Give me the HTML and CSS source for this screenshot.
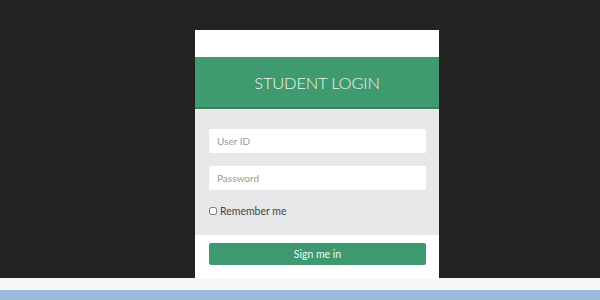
FILE: index.html
```html
<!DOCTYPE html>
<html lang="en">
<head>
    <meta charset="UTF-8">
    <title>Student Login</title>
    <link rel="stylesheet" href="styles.css">
</head>
<body>
    <div class="stage">
        <form class="login">
            <div class="login-top"></div>
            <h1 class="login-title">STUDENT LOGIN</h1>
            <div class="login-body">
                <input class="field" type="text" placeholder="User ID">
                <input class="field" type="password" placeholder="Password">
                <label class="remember"><input type="checkbox"> Remember me</label>
            </div>
            <div class="login-foot">
                <button class="btn" type="button">Sign me in</button>
            </div>
        </form>
    </div>
    <div class="strip"></div>
    <div class="bar"></div>
</body>
</html>
```

FILE: styles.css
```css
body {
    margin: 0;
    padding: 0;
    height: 300px;
    overflow: hidden;
    font-family: Lato, "Open Sans", sans-serif;
    background-color: #f7f7f7;
}
.stage {
    height: 278px;
    background-color: #222222;
    display: flex;
    justify-content: center;
    padding-top: 30px;
    box-sizing: border-box;
}
.login {
    width: 244px;
    height: 249px;
    margin-left: 34px;
    background-color: #ffffff;
    display: flex;
    flex-direction: column;
    position: relative;
    z-index: 1;
}
.login-top {
    height: 27px;
}
.login-title {
    margin: 0;
    height: 50px;
    line-height: 52px;
    background-color: #409a6f;
    border-bottom: 2px solid #37845f;
    color: #e8f6ee;
    font-weight: 300;
    font-size: 16.5px;
    letter-spacing: -0.2px;
    text-align: center;
}
.login-body {
    background-color: #e8e8ea;
    padding: 20px 13px 0 14px;
    height: 126px;
    box-sizing: border-box;
    display: flex;
    flex-direction: column;
}
.field {
    height: 24px;
    border: none;
    border-radius: 2px;
    background: #ffffff;
    padding: 0 8px;
    font-family: inherit;
    font-size: 10px;
    color: #444;
    margin-bottom: 13px;
    box-sizing: border-box;
}
.field::placeholder {
    color: #9a9a9a;
}
.remember {
    display: flex;
    align-items: center;
    font-size: 10.5px;
    color: #444;
    margin-top: 2px;
}
.remember input {
    width: 8px;
    height: 8px;
    margin: 0 3px 0 0;
}
.login-foot {
    padding: 7px 13px 0 14px;
}
.btn {
    width: 100%;
    height: 22px;
    border: none;
    border-radius: 2px;
    background-color: #3f9970;
    color: #eef7f2;
    font-family: inherit;
    font-size: 10.5px;
}
.strip {
    height: 12px;
}
.bar {
    height: 10px;
    background-color: #9db9dc;
}
```
